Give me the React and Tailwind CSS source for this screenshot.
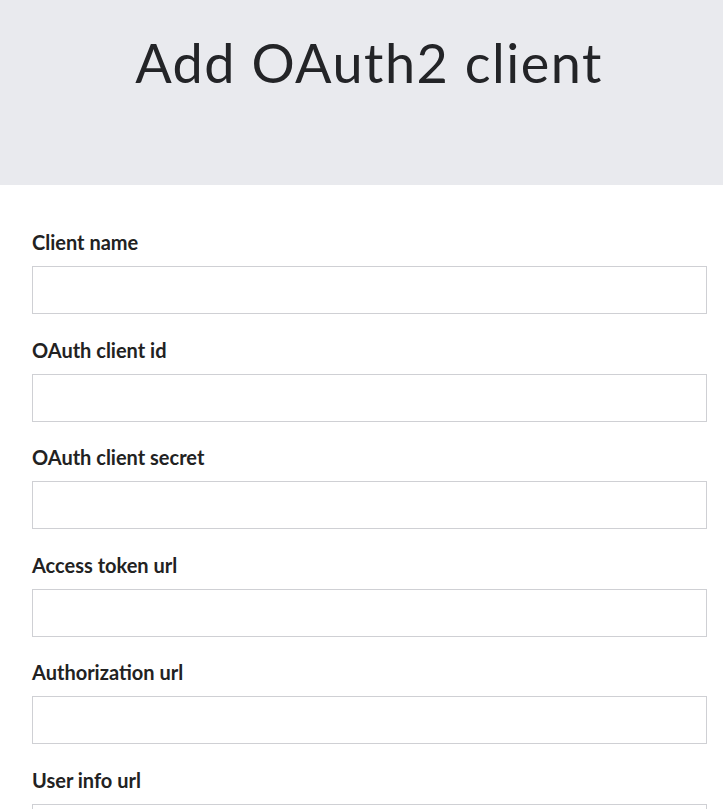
import React from "react"

const fields = [
  "Client name",
  "OAuth client id",
  "OAuth client secret",
  "Access token url",
  "Authorization url",
  "User info url",
]

function Field({ label }) {
  return (
    <div className="mb-[23.5px]">
      <label className="mb-[12px] block text-[20px] font-bold leading-[24px] text-[#222]">
        {label}
      </label>
      <input
        type="text"
        className="block h-[48px] w-full border border-[#cfd0d4] bg-white px-3 outline-none"
      />
    </div>
  )
}

export default function App() {
  return (
    <div
      className="min-h-screen bg-white"
      style={{ fontFamily: "Lato, 'Open Sans', sans-serif" }}
    >
      <div className="flex h-[185px] items-start justify-center bg-[#e9eaee] pl-[15px] pt-[31px]">
        <h1 className="text-[54px] font-normal leading-[64px] tracking-[1.5px] text-[#232427]">
          Add OAuth2 client
        </h1>
      </div>
      <form className="pl-8 pr-4 pt-[45px]">
        {fields.map((f) => (
          <Field key={f} label={f} />
        ))}
      </form>
    </div>
  )
}
